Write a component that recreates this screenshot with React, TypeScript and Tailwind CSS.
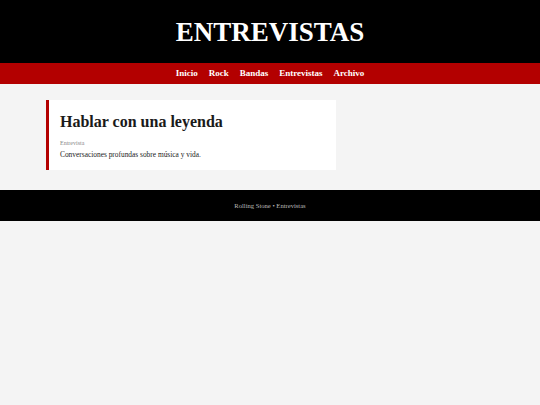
export default function App() {
  const serif = { fontFamily: 'Georgia, "Liberation Serif", "DejaVu Serif", serif' };
  return (
    <div className="min-h-[405px] bg-[#f4f4f4]" style={serif}>
      <header className="bg-black h-[63px] flex items-center justify-center">
        <h1 className="text-white font-bold text-[27px] leading-none pt-[1px]">ENTREVISTAS</h1>
      </header>
      <nav className="bg-[#b30000] h-[21px] flex items-center justify-center gap-[11px] text-white font-bold text-[9px]">
        <span>Inicio</span>
        <span>Rock</span>
        <span>Bandas</span>
        <span>Entrevistas</span>
        <span>Archivo</span>
      </nav>
      <main className="px-[46px] pt-[16px] pb-[20px]">
        <article className="w-[290px] h-[70px] bg-white border-l-[3px] border-[#b30000] pl-[11px] pt-[14px]">
          <h2 className="font-bold text-[16px] leading-none text-[#1a1a1a]">Hablar con una leyenda</h2>
          <div className="text-[6px] text-[#888] mt-[10px] leading-none">Entrevista</div>
          <p className="text-[7.4px] text-[#222] mt-[5px] leading-none">Conversaciones profundas sobre música y vida.</p>
        </article>
      </main>
      <footer className="bg-black h-[31px] flex items-center justify-center text-[6.6px] text-[#bbb]">
        Rolling Stone • Entrevistas
      </footer>
    </div>
  );
}
